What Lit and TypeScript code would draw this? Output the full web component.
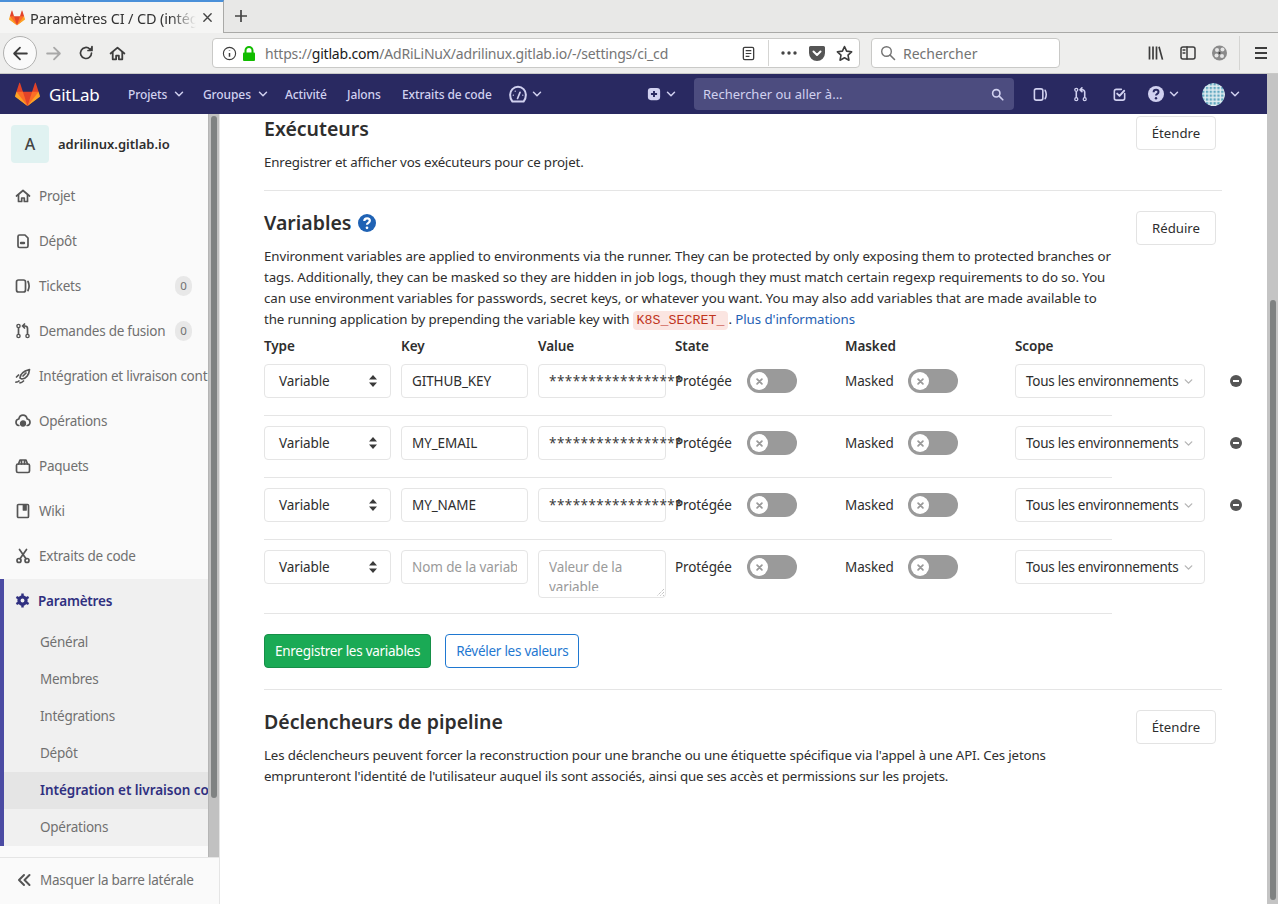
import { LitElement, html, css, svg } from "lit";
import { customElement } from "lit/decorators.js";

const ic = (body: unknown, size = 16, cls = "") => html`<svg class="ic ${cls}" width=${size} height=${size} viewBox="0 0 16 16" fill="none" stroke="currentColor" stroke-width="1.7" stroke-linecap="round" stroke-linejoin="round">${body}</svg>`;

const tanuki = (size: number) => html`<svg class="ic" width=${size} height=${size} viewBox="0 0 36 36"><path fill="#e24329" d="M2 14l9.38 9v-9l-4-12.28c-.205-.632-1.176-.632-1.38 0z"/><path fill="#e24329" d="M34 14l-9.38 9v-9l4-12.28c.205-.632 1.176-.632 1.38 0z"/><path fill="#e24329" d="M18,34.38 3,14 33,14 Z"/><path fill="#fc6d26" d="M18,34.38 11.38,14 2,14 6,25Z"/><path fill="#fc6d26" d="M18,34.38 24.62,14 34,14 30,25Z"/><path fill="#fca326" d="M2 14L.1 20.16c-.18.565 0 1.2.5 1.56l17.42 12.66z"/><path fill="#fca326" d="M34 14l1.9 6.16c.18.565 0 1.2-.5 1.56L18 34.38z"/></svg>`;

const chev = svg`<path d="M4 6l4 4 4-4"/>`;
const iHome = svg`<path d="M1.500 8L8 2.500 14.500 8"/><path d="M3.500 7v6.500h3.200V10h2.600v3.500h3.200V7"/>`;
const iDoc = svg`<path d="M3 3.500A1.500 1.500 0 0 1 4.500 2H10l3 3v8a1.500 1.500 0 0 1-1.500 1.500h-7A1.500 1.500 0 0 1 3 13z"/><path d="M6 10h3" stroke-width="2.400"/>`;
const iIssues = svg`<rect x="1.500" y="2" width="9" height="12" rx="2"/><path d="M13 3.500c1.400 2.800 1.400 6.200 0 9"/>`;
const iMr = svg`<circle cx="3.500" cy="13" r="1.600" stroke-width="1.400"/><circle cx="12.500" cy="13" r="1.600" stroke-width="1.400"/><circle cx="3.500" cy="3" r="1.600" stroke-width="1.400"/><path d="M3.500 5v6M12.500 11V5.500c0-1.500-1-2.500-2.500-2.500H8M9.500 1L7.500 3l2 2"/>`;
const iRocket = svg`<path d="M5 10C5 6 9 3 14.500 1.500 14 7 11 11 7 11z"/><path d="M8 8l3-3M3.500 7L1.500 9M4 13c-1 1-2 1.200-3 1.200M8.500 13c-1 1-2.500 1.800-3.500 1.800"/>`;
const iOps = svg`<path d="M3.800 12.500C2 12.200 1 10.800 1 9.200c0-1.600 1.200-3 2.800-3.200C4.400 3.600 6 2.200 8 2.200S11.600 3.600 12.200 6C13.800 6.200 15 7.600 15 9.200c0 1.600-1 3-2.800 3.300"/><circle cx="8" cy="10.500" r="2.300" fill="currentColor"/>`;
const iPkg = svg`<rect x="1.500" y="6" width="13" height="8.500" rx="1.500"/><path d="M3.500 6l1.500-4h6l1.500 4M6.500 2v4M9.500 2v4"/>`;
const iWiki = svg`<rect x="2.500" y="1.500" width="11" height="13" rx="1"/><path d="M8.500 2v5h2.500V2" fill="currentColor"/>`;
const iSnip = svg`<circle cx="4" cy="12.500" r="2"/><circle cx="12" cy="12.500" r="2"/><path d="M5 10.800L11.500 1.500M11 10.800L4.500 1.500"/>`;
const iGear = svg`<circle cx="8" cy="8" r="3.800" stroke-width="3.400"/><path stroke-width="2.600" stroke-linecap="butt" d="M8 .5v3M8 12.500v3M1.500 4.250l2.600 1.500M11.900 10.250l2.600 1.500M1.500 11.750l2.600-1.500M11.900 5.750l2.600-1.500"/>`;
const iPlus = svg`<rect x="1" y="1" width="14" height="14" rx="3.500" fill="currentColor" stroke="none"/><path d="M8 4.500v7M4.500 8h7" stroke="#292961" stroke-width="2.200" stroke-linecap="butt"/>`;
const iSearch = svg`<circle cx="6.500" cy="6.500" r="4.500" stroke-width="2"/><path d="M10 10l4.500 4.500" stroke-width="2"/>`;
const iTodo = svg`<path d="M13.500 7v5a2 2 0 0 1-2 2h-7a2 2 0 0 1-2-2V4.500a2 2 0 0 1 2-2H10"/><path d="M5.500 7L8 9.500l5-5.500" stroke-width="2"/>`;
const iHelp = svg`<circle cx="8" cy="8" r="8" fill="currentColor" stroke="none"/><path d="M5.600 6.200c0-1.500 1.100-2.400 2.500-2.400s2.400.9 2.400 2.200c0 1.900-2.500 1.800-2.500 3.600" stroke="#292961" stroke-width="2" stroke-linecap="butt" fill="none"/><circle cx="8" cy="12.300" r="1.200" fill="#292961" stroke="none"/>`;
const iGauge = svg`<path d="M3 14.700C1.600 13.200 1 11 1 8.700 1 4.700 4.100 1.600 8 1.600s7 3.100 7 7.100c0 2.300-.6 4.500-2 6z" stroke-width="1.800"/><path d="M7.600 12L9.800 6.500" stroke-width="1.500"/><path d="M3.800 9h.1M5.500 5.500h.1M12.200 9h.1" stroke-width="1.100"/>`;

const AST = "*****************";
const rows = [
  { key: "GITHUB_KEY", value: AST, rm: true },
  { key: "MY_EMAIL", value: AST, rm: true },
  { key: "MY_NAME", value: AST, rm: true },
  { key: "", value: "", rm: false },
];

const xMark = svg`<path d="M4.500 4.500l7 7M11.500 4.500l-7 7" stroke-width="2.600"/>`;

@customElement("app-root")
export class AppRoot extends LitElement {
  static styles = css`
    :host { display: block; height: 904px; overflow: hidden; font-family: "Noto Sans", sans-serif; font-size: 14px; color: #2e2e2e; background: #fff; }
    * { box-sizing: border-box; }
    .ic { flex: none; display: block; }

    .tabbar { height: 33px; background: #e8e8e7; display: flex; border-bottom: 1px solid #a9a9a7; }
    .tab { width: 224px; height: 33px; background: #f5f5f4; border-top: 2px solid #4a90d9; border-right: 1px solid #a9a9a7; display: flex; align-items: center; padding-left: 9px; }
    .tabtitle { margin-left: 5px; width: 166px; overflow: hidden; white-space: nowrap; font-size: 14.500px; color: #333; letter-spacing: -.15px; -webkit-mask-image: linear-gradient(to right, #000 85%, transparent); mask-image: linear-gradient(to right, #000 85%, transparent); }
    .tabclose { margin-left: 5px; color: #444; }
    .newtab { margin-left: 9px; color: #444; align-self: center; }
    .toolbar { height: 41px; background: #eeeeed; border-bottom: 1px solid #c9c9c7; display: flex; align-items: center; color: #3d3d3d; }
    .back { width: 34px; height: 34px; margin-left: 3px; border-radius: 50%; border: 1px solid #b1b1b0; background: #fafafa; display: flex; align-items: center; justify-content: center; }
    .fwd { margin-left: 8px; color: #a8a8a8; }
    .reload { margin-left: 16px; }
    .homeb { margin-left: 15px; }
    .urlbar { margin-left: 86px; width: 648px; height: 30px; background: #fff; border: 1px solid #c9c9c7; border-radius: 4px; display: flex; align-items: center; padding-left: 9px; }
    .lock { margin-left: 5px; }
    .url { margin-left: 9px; width: 476px; white-space: nowrap; overflow: hidden; font-size: 14px; color: #757575; letter-spacing: -.19px; }
    .url b { font-weight: 400; color: #1a1a1a; }
    .sep { width: 1px; height: 26px; background: #d5d5d3; margin-left: 12px; }
    .m12 { margin-left: 12px; }
    .m11 { margin-left: 11px; }
    .searchbar { margin-left: 11px; width: 189px; height: 30px; background: #fff; border: 1px solid #c9c9c7; border-radius: 4px; display: flex; align-items: center; padding-left: 8px; color: #737373; font-size: 14px; }
    .searchbar span { margin-left: 7px; }
    .lib { margin-left: 88px; }
    .m16 { margin-left: 16px; }
    .sep2 { width: 1px; height: 34px; background: #d5d5d3; margin-left: 11px; }
    .ham { margin-left: 13px; }

    .below { display: flex; height: 830px; }
    .page { width: 1267px; display: flex; flex-direction: column; }
    .vbar { width: 11px; background: #c4c4c4; padding: 226px 2px 4px 3px; }
    .vbar i { display: block; height: 100%; background: #7f8282; border-radius: 3px; }
    .nav { height: 40px; background: #292961; display: grid; grid-template-columns: 34px 79px 75px 82px 62px 55px 107px 138px 47px 339px 40px 39px 36px 54px 1fr; padding-left: 15px; align-items: center; color: #d1d1f0; font-size: 12px; letter-spacing: -.1px; font-weight: 500; white-space: nowrap; }
    .brand { font-size: 17px; color: #fff; letter-spacing: -.2px; font-weight: 400; }
    .ni { display: flex; align-items: center; }
    .ni svg + svg { margin-left: 3px; }
    .gr svg { margin-left: 5px; }
    .nsearch { width: 320px; height: 32px; background: #4c4c7f; border-radius: 4px; display: flex; align-items: center; justify-content: space-between; padding: 0 10px 0 9px; color: #d1d1f0; font-weight: 400; font-size: 13px; letter-spacing: 0; }
    .globe { width: 23px; height: 23px; border-radius: 50%; flex: none; }

    .work { flex: 1; display: flex; min-height: 0; }
    .side { width: 220px; flex: none; background: #fafafa; border-right: 1px solid #e5e5e5; display: flex; flex-direction: column; }
    .sscroll { flex: 1; min-height: 0; display: flex; }
    .slist { width: 208px; overflow: hidden; }
    .strack { width: 11px; background: #c1c1c1; padding: 2px 2px 0; border-left: 1px solid #b5b5b5; }
    .strack i { display: block; width: 6px; height: 682px; background: #7f8282; border-radius: 3px; }
    .shead { height: 60px; display: flex; align-items: center; padding: 0 0 1px 11px; font-weight: 600; font-size: 13px; color: #2e2e2e; white-space: nowrap; }
    .ava { width: 38px; height: 38px; border-radius: 4px; background: #e0f2f1; display: flex; align-items: center; justify-content: center; font-size: 16px; font-weight: 500; margin-right: 9px; color: #444; }
    .si { height: 45px; display: flex; align-items: center; padding: 0 0 2px 15px; color: #707070; white-space: nowrap; font-size: 13.500px; letter-spacing: -.25px; }
    .si svg { margin-right: 8px; color: #555; }
    .count { margin-left: auto; margin-right: 16px; width: 17px; height: 20px; border-radius: 9px; background: #e8e8e8; display: flex; align-items: center; justify-content: center; font-size: 11.500px; color: #707070; letter-spacing: 0; }
    .sec { background: #f0f0f0; border-left: 4px solid #4b4ba3; }
    .sec .si { padding-left: 11px; color: #303080; font-weight: 600; letter-spacing: -.2px; }
    .sec .si svg { color: #303080; }
    .sub { height: 37px; display: flex; align-items: center; padding: 0 0 2px 36px; color: #707070; white-space: nowrap; font-size: 13.500px; letter-spacing: -.25px; }
    .sub.on { background: #e5e5e5; color: #303080; font-weight: 600; letter-spacing: -.05px; }
    .sbot { height: 47px; flex: none; border-top: 1px solid #e5e5e5; background: #fafafa; display: flex; align-items: center; padding: 0 0 2px 16px; color: #707070; font-size: 13.500px; letter-spacing: -.24px; white-space: nowrap; }
    .sbot svg { margin-right: 8px; color: #555; }

    main { flex: 1; padding: 0 45px 0 44px; min-width: 0; }
    .sechead { display: flex; justify-content: space-between; align-items: flex-start; height: 34px; }
    h4 { margin: 0; font-size: 19.500px; font-weight: 600; line-height: 24px; color: #2e2e2e; display: flex; align-items: center; white-space: nowrap; }
    h4 svg { margin-left: 7px; color: #1f62b4; }
    .btn { width: 80px; height: 34px; margin-right: 6px; border: 1px solid #e3e3e3; border-radius: 4px; background: #fff; display: flex; align-items: center; justify-content: center; font-size: 13.200px; color: #2e2e2e; flex: none; }
    p { margin: 0; line-height: 21px; white-space: nowrap; font-size: 13.300px; color: #2e2e2e; letter-spacing: -.15px; }
    p.en { letter-spacing: -.08px; }
    p.en .tight { letter-spacing: -.13px; }
    hr { border: 0; border-top: 1px solid #e5e5e5; margin: 0; }
    .s1 { height: 76px; }
    .s1 .sechead { height: 30px; }
    .s1 h4 { line-height: 30px; }
    .s1 .btn { margin-top: 2px; }
    .s1 p { margin-top: 8px; }
    .s2 { padding-top: 20px; }
    .s2 p, .s3 p { margin-top: 1px; }
    code { font-family: "Liberation Mono", monospace; font-size: 13.300px; letter-spacing: 0; background: #fbe5e1; color: #c0341d; border-radius: 4px; padding: 2px 4px; }
    a { color: #1f62b4; text-decoration: none; }
    .heads { display: grid; grid-template-columns: 127px 127px 128px 159px 160px 190px; column-gap: 10px; margin-top: 3px; height: 23px; align-items: center; font-weight: 600; font-size: 13.500px; letter-spacing: -.1px; width: 848px; }
    .heads .st { margin-left: -1px; }
    .row { display: grid; grid-template-columns: 127px 127px 128px 159px 160px 190px 12px; column-gap: 10px; width: 848px; border-bottom: 1px solid #e5e5e5; height: 62px; padding-top: 10px; align-items: start; }
    .row.first { height: 59px; padding-top: 7px; }
    .row.last { height: 74px; }
    .fld { height: 34px; border: 1px solid #e5e5e5; border-radius: 4px; background: #fff; display: flex; align-items: center; padding-left: 10px; white-space: nowrap; font-size: 13.500px; letter-spacing: -.1px; color: #2e2e2e; }
    .sel { padding: 0 13px 0 14px; justify-content: space-between; }
    .val { letter-spacing: .45px; padding-left: 10px; color: #3a3a3a; }
    .ph { color: #9a9a9a; }
    .ph span { width: 105px; overflow: hidden; }
    .ta { height: 48px; display: block; padding: 6px 10px 0; white-space: normal; line-height: 20px; color: #9a9a9a; position: relative; }
    .ta .clip { display: block; height: 34px; overflow: hidden; }
    .ta svg { position: absolute; right: 0; bottom: 0; }
    .tog { display: flex; align-items: center; height: 34px; font-size: 13.500px; letter-spacing: -.1px; white-space: nowrap; }
    .tog.state { margin-left: -1px; }
    .tog .l1 { width: 72px; }
    .tog .l2 { width: 63px; }
    .sw { width: 50px; height: 24px; border-radius: 12px; background: #9a9a9a; padding: 3px; }
    .sw i { display: flex; width: 18px; height: 18px; border-radius: 50%; background: #fff; align-items: center; justify-content: center; color: #9a9a9a; }
    .scope { padding: 0 9px 0 10px; justify-content: space-between; width: 190px; letter-spacing: -.25px; }
    .scope svg { color: #b5b5b5; }
    .rm { height: 34px; display: flex; align-items: center; margin-left: 15px; }
    .acts { display: flex; padding-top: 20px; gap: 14px; height: 75px; }
    .b { height: 34px; border-radius: 4px; display: flex; align-items: center; padding: 0 10px; font-size: 13.500px; letter-spacing: -.27px; white-space: nowrap; }
    .green { background: #1aaa55; border: 1px solid #168f48; color: #fff; }
    .blue { border: 1px solid #1f78d1; color: #1f78d1; background: #fff; }
    .s3 { padding-top: 20px; }
  `;

  private row(r: { key: string; value: string; rm: boolean }, i: number) {
    const cls = i === 0 ? "row first" : i === 3 ? "row last" : "row";
    return html`<div class=${cls}>
      <div class="fld sel">Variable
        <svg class="ic" width="8" height="12" viewBox="0 0 8 12" fill="#3a3a3a"><path d="M4 0l4 4.500H0zM4 12L0 7.500h8z"/></svg>
      </div>
      ${r.key ? html`<div class="fld">${r.key}</div>` : html`<div class="fld ph"><span>Nom de la variable</span></div>`}
      ${r.value ? html`<div class="fld val">${r.value}</div>` : html`<div class="fld ta"><span class="clip">Valeur de la variable</span>
        <svg width="10" height="10" viewBox="0 0 10 10" stroke="#aaa" stroke-dasharray="1 1"><path d="M9 2L2 9M9 5L5 9M9 8L8 9"/></svg></div>`}
      <div class="tog state"><span class="l1">Protégée</span><div class="sw"><i>${ic(xMark, 11)}</i></div></div>
      <div class="tog"><span class="l2">Masked</span><div class="sw"><i>${ic(xMark, 11)}</i></div></div>
      <div class="fld scope">Tous les environnements ${ic(chev, 13)}</div>
      ${r.rm ? html`<div class="rm"><svg class="ic" width="12" height="12" viewBox="0 0 12 12"><circle cx="6" cy="6" r="6" fill="#555"/><rect x="3" y="5" width="6" height="2" fill="#fff"/></svg></div>` : ""}
    </div>`;
  }

  render() {
    const sideItems: [string, unknown, string?][] = [
      ["Projet", iHome], ["Dépôt", iDoc], ["Tickets", iIssues, "0"], ["Demandes de fusion", iMr, "0"],
      ["Intégration et livraison continue", iRocket], ["Opérations", iOps], ["Paquets", iPkg], ["Wiki", iWiki], ["Extraits de code", iSnip],
    ];
    const subs = ["Général", "Membres", "Intégrations", "Dépôt", "Intégration et livraison continue", "Opérations"];
    return html`
      <div class="tabbar">
        <div class="tab">${tanuki(16)}<span class="tabtitle">Paramètres CI / CD (intégration)</span>
          ${ic(svg`<path d="M3.500 3.500l9 9M12.500 3.500l-9 9"/>`, 13, "tabclose")}</div>
        ${ic(svg`<path d="M8 2v12M2 8h12" stroke-linecap="butt"/>`, 16, "newtab")}
      </div>
      <div class="toolbar">
        <div class="back">${ic(svg`<path d="M14 8H2.500M7.500 2.500L2 8l5.500 5.500"/>`, 17)}</div>
        ${ic(svg`<path d="M2 8h11.500M8.500 2.500L14 8l-5.500 5.500"/>`, 17, "fwd")}
        ${ic(svg`<path d="M13.500 8a5.500 5.500 0 1 1-1.700-4"/><path d="M14 1.500v4h-4" fill="currentColor"/>`, 16, "reload")}
        ${ic(iHome, 17, "homeb")}
        <div class="urlbar">
          ${ic(svg`<circle cx="8" cy="8" r="6.500" stroke-width="1.200"/><path d="M8 7.500v4M8 4.500v.5" stroke-width="1.600" stroke-linecap="butt"/>`, 15)}
          <svg class="ic lock" width="14" height="15" viewBox="0 0 14 15"><path d="M3.500 7V4.500a3.500 3.500 0 0 1 7 0V7" fill="none" stroke="#12bc00" stroke-width="2"/><rect x="1" y="6.500" width="12" height="8.500" rx="1" fill="#12bc00"/></svg>
          <span class="url">https://<b>gitlab.com</b>/AdRiLiNuX/adrilinux.gitlab.io/-/settings/ci_cd</span>
          ${ic(svg`<rect x="2.500" y="1.500" width="11" height="13" rx="1.500" stroke-width="1.400"/><path d="M5 5h6M5 8h6M5 11h4" stroke-width="1.300" stroke-linecap="butt"/>`, 15)}
          <div class="sep"></div>
          <svg class="ic m12" width="16" height="4" viewBox="0 0 16 4" fill="#444"><circle cx="2" cy="2" r="1.700"/><circle cx="8" cy="2" r="1.700"/><circle cx="14" cy="2" r="1.700"/></svg>
          <svg class="ic m12" width="16" height="15" viewBox="0 0 16 15"><path d="M1.500 0h13A1.500 1.500 0 0 1 16 1.500V7A8 8 0 0 1 0 7V1.500A1.500 1.500 0 0 1 1.500 0z" fill="#555"/><path d="M4.500 5.500L8 9l3.500-3.500" fill="none" stroke="#fff" stroke-width="2" stroke-linecap="round" stroke-linejoin="round"/></svg>
          ${ic(svg`<path d="M8 1.500l2 4.300 4.700.6-3.400 3.200.9 4.700L8 12l-4.200 2.300.9-4.700L1.300 6.400 6 5.800z" stroke-width="1.500"/>`, 17, "m11")}
        </div>
        <div class="searchbar">${ic(svg`<circle cx="6.500" cy="6.500" r="4.800" stroke-width="1.400"/><path d="M10 10l4.500 4.500" stroke-width="1.600"/>`, 16)}<span>Rechercher</span></div>
        <svg class="ic lib" width="16" height="16" viewBox="0 0 16 16" stroke="#3d3d3d" stroke-width="1.700" fill="none"><path d="M1.500 1.500v13M5 1.500v13M8.500 1.500v13M11 1.800l3.500 12.800"/></svg>
        ${ic(svg`<rect x="1" y="2" width="14" height="12" rx="2" stroke-width="1.500"/><path d="M7 2v12" stroke-width="1.500"/><path d="M3 5h2M3 8h2" stroke-width="1.300"/>`, 16, "m16")}
        <svg class="ic m16" width="16" height="18" viewBox="0 0 16 18"><circle cx="7.500" cy="9" r="7.500" fill="#8a8a8a"/><circle cx="5" cy="6" r="2" fill="#e6e6e6"/><circle cx="10.500" cy="5.500" r="2" fill="#e6e6e6"/><circle cx="4.500" cy="11.500" r="2" fill="#e6e6e6"/><circle cx="10" cy="12" r="2" fill="#e6e6e6"/><circle cx="7.500" cy="9" r="1" fill="#333"/></svg>
        <div class="sep2"></div>
        ${ic(svg`<path d="M2 3h12M2 8h12M2 13h12" stroke-width="2" stroke-linecap="butt"/>`, 16, "ham")}
      </div>
      <div class="below">
        <div class="page">
          <div class="nav">
            <span class="ni">${tanuki(25)}</span>
            <span class="brand">GitLab</span>
            <span class="ni gr">Projets${ic(chev, 14)}</span>
            <span class="ni gr">Groupes${ic(chev, 14)}</span>
            <span class="ni">Activité</span>
            <span class="ni">Jalons</span>
            <span class="ni">Extraits de code</span>
            <span class="ni">${ic(iGauge, 18)}${ic(chev, 14)}</span>
            <span class="ni">${ic(iPlus, 14)}${ic(chev, 14)}</span>
            <span><div class="nsearch">Rechercher ou aller à...${ic(iSearch, 13)}</div></span>
            <span class="ni">${ic(iIssues, 15)}</span>
            <span class="ni">${ic(iMr, 15)}</span>
            <span class="ni">${ic(iTodo, 15)}</span>
            <span class="ni">${ic(iHelp, 16)}${ic(chev, 14)}</span>
            <span class="ni"><svg class="globe" viewBox="0 0 24 24"><defs><pattern id="dots" width="4" height="4" patternUnits="userSpaceOnUse"><rect width="4" height="4" fill="#e3eef2"/><rect width="2.500" height="2.500" fill="#62a8c0"/></pattern></defs><circle cx="12" cy="12" r="12" fill="url(#dots)"/></svg>${ic(chev, 14)}</span>
          </div>
          <div class="work">
            <aside class="side">
              <div class="sscroll">
                <div class="slist">
                  <div class="shead"><div class="ava">A</div>adrilinux.gitlab.io</div>
                  ${sideItems.map(([t, i, c]) => html`<div class="si">${ic(i, 16)}${t}${c ? html`<span class="count">${c}</span>` : ""}</div>`)}
                  <div class="sec">
                    <div class="si">${ic(iGear, 15)}Paramètres</div>
                    ${subs.map((s, n) => html`<div class="sub ${n === 4 ? "on" : ""}">${s}</div>`)}
                  </div>
                </div>
                <div class="strack"><i></i></div>
              </div>
              <div class="sbot">${ic(svg`<path d="M8 3L3 8l5 5M13.500 3l-5 5 5 5" stroke-width="2"/>`, 16)}Masquer la barre latérale</div>
            </aside>
            <main>
              <section class="s1">
                <div class="sechead"><h4>Exécuteurs</h4><div class="btn">Étendre</div></div>
                <p>Enregistrer et afficher vos exécuteurs pour ce projet.</p>
              </section>
              <hr />
              <section class="s2">
                <div class="sechead"><h4>Variables ${ic(svg`<circle cx="8" cy="8" r="8" fill="currentColor" stroke="none"/><path d="M5.600 6.200c0-1.500 1.100-2.400 2.500-2.400s2.400.9 2.400 2.200c0 1.900-2.500 1.800-2.500 3.600" stroke="#fff" stroke-width="2" stroke-linecap="butt"/><circle cx="8" cy="12.300" r="1.200" fill="#fff" stroke="none"/>`, 18)}</h4><div class="btn">Réduire</div></div>
                <p class="en">Environment variables are applied to environments via the runner. They can be protected by only exposing them to protected branches or<br />tags. Additionally, they can be masked so they are hidden in job logs, though they must match certain regexp requirements to do so. You<br />can use environment variables for passwords, secret keys, or whatever you want. You may also add variables that are made available to<br /><span class="tight">the running application by prepending the variable key with</span> <code>K8S_SECRET_</code>. <a>Plus d'informations</a></p>
                <div class="heads"><span>Type</span><span>Key</span><span>Value</span><span class="st">State</span><span>Masked</span><span>Scope</span></div>
                ${rows.map((r, i) => this.row(r, i))}
                <div class="acts"><div class="b green">Enregistrer les variables</div><div class="b blue">Révéler les valeurs</div></div>
              </section>
              <hr />
              <section class="s3">
                <div class="sechead"><h4>Déclencheurs de pipeline</h4><div class="btn">Étendre</div></div>
                <p>Les déclencheurs peuvent forcer la reconstruction pour une branche ou une étiquette spécifique via l'appel à une API. Ces jetons<br />emprunteront l'identité de l'utilisateur auquel ils sont associés, ainsi que ses accès et permissions sur les projets.</p>
              </section>
            </main>
          </div>
        </div>
        <div class="vbar"><i></i></div>
      </div>
    `;
  }
}
